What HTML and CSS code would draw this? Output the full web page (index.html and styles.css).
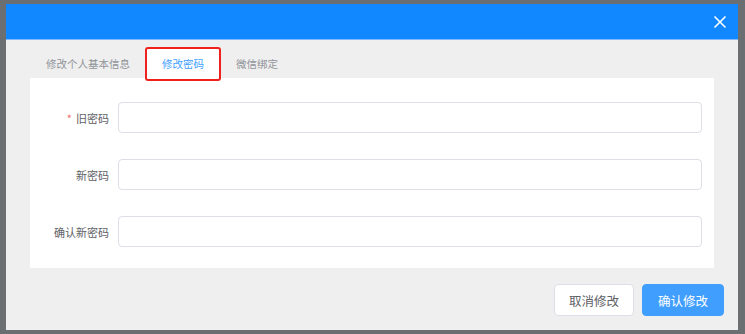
FILE: index.html
```html
<!DOCTYPE html>
<html>
<head>
    <title>修改密码</title>
    <link rel="stylesheet" href="styles.css">
</head>
<body>
    <div class="dialog">
        <div class="dialog-header">
            <svg class="close" width="14" height="14" viewBox="0 0 14 14">
                <path d="M1.5 1.5 L12.5 12.5 M12.5 1.5 L1.5 12.5" stroke="#fff" stroke-width="1.6" fill="none"/>
            </svg>
        </div>
        <div class="tabs">
            <div class="tab">修改个人基本信息</div>
            <div class="tab active">修改密码</div>
            <div class="tab">微信绑定</div>
        </div>
        <div class="panel">
            <div class="form-row">
                <label class="form-label"><span class="required">*</span>旧密码</label>
                <input type="password" class="form-input">
            </div>
            <div class="form-row">
                <label class="form-label">新密码</label>
                <input type="password" class="form-input">
            </div>
            <div class="form-row">
                <label class="form-label">确认新密码</label>
                <input type="password" class="form-input">
            </div>
        </div>
        <div class="dialog-footer">
            <button class="btn">取消修改</button>
            <button class="btn primary">确认修改</button>
        </div>
    </div>
</body>
</html>
```

FILE: styles.css
```css
body {
    margin: 0;
    height: 334px;
    overflow: hidden;
    background: #6c6f72;
    font-family: "Noto Sans CJK SC", "Noto Sans", sans-serif;
}
.dialog {
    margin: 4px 0 0 6px;
    width: 732px;
    height: 326px;
    background: #efefef;
    display: flex;
    flex-direction: column;
}
.dialog-header {
    height: 35px;
    background: #1188ff;
    border-bottom: 1px solid #7fbaff;
    display: flex;
    align-items: center;
    justify-content: flex-end;
    padding-right: 11px;
}
.tabs {
    display: flex;
    padding: 7px 0 0 25px;
    height: 34px;
    margin-bottom: -3px;
    position: relative;
}
.tab {
    height: 34px;
    line-height: 34px;
    padding: 0 15px;
    font-size: 10.5px;
    color: #909399;
}
.tab.active {
    background: #fff;
    color: #409eff;
    border: 2px solid #f0201c;
    border-radius: 3px;
    height: 30px;
    line-height: 30px;
}
.panel {
    background: #fff;
    margin: 0 24px 0 24px;
    height: 190px;
    box-sizing: border-box;
    padding: 24px 12px 0 0;
    display: flex;
    flex-direction: column;
    gap: 26px;
}
.form-row {
    display: flex;
    align-items: center;
}
.form-label {
    width: 79px;
    padding-right: 9px;
    text-align: right;
    font-size: 11px;
    color: #606266;
}
.required {
    color: #f56c6c;
    margin-right: 4px;
}
.form-input {
    flex: 1;
    height: 31px;
    box-sizing: border-box;
    border: 1px solid #dcdfe6;
    border-radius: 4px;
    background: #fff;
    outline: none;
}
.dialog-footer {
    display: flex;
    justify-content: flex-end;
    gap: 8px;
    padding: 16px 14px 0 0;
}
.btn {
    height: 32px;
    width: 80px;
    border: 1px solid #dcdfe6;
    border-radius: 4px;
    background: #fff;
    color: #606266;
    font-family: inherit;
    font-size: 12.5px;
    padding: 0;
}
.btn.primary {
    width: 82px;
    background: #409eff;
    border-color: #409eff;
    color: #fff;
}
```
